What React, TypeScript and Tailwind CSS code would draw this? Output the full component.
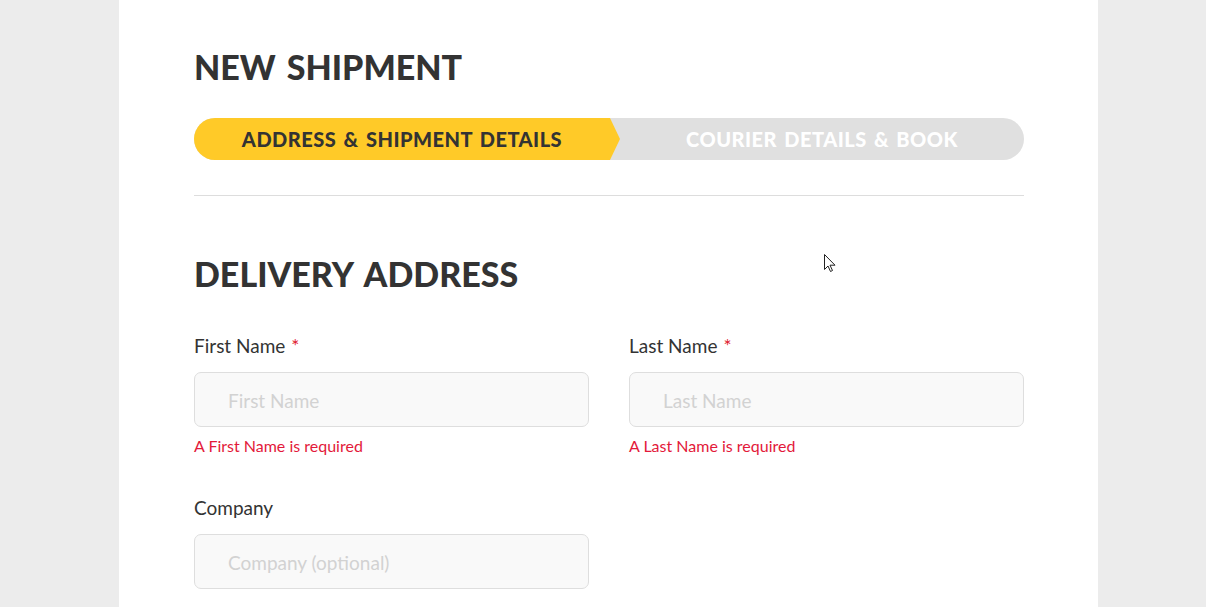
import React from "react";

const font = { fontFamily: "Lato, 'Noto Sans', 'Liberation Sans', sans-serif" };

function Field({
  label,
  placeholder,
  required,
  error,
}: {
  label: string;
  placeholder: string;
  required?: boolean;
  error?: string;
}) {
  return (
    <div className="flex flex-col">
      <label className="text-[19px] leading-[24px] text-[#333]">
        {label}
        {required && <span className="ml-[6px] text-[#e0192d]">*</span>}
      </label>
      <input
        placeholder={placeholder}
        className="mt-[14px] h-[55px] w-full rounded-[7px] border border-[#dedede] bg-[#f9f9f9] px-[33px] pt-[2px] text-[19px] text-[#333] outline-none placeholder:text-[#d2d2d2]"
      />
      {error && (
        <p className="mt-[9px] text-[16px] leading-[20px] text-[#e3193a]">{error}</p>
      )}
    </div>
  );
}

function Stepper() {
  return (
    <div className="flex h-[42px] overflow-hidden rounded-full bg-[#e0e0e0]">
      <div className="flex w-[426px] items-center justify-center bg-[#ffca28] pr-[10px] [clip-path:polygon(0_0,calc(100%-10px)_0,100%_50%,calc(100%-10px)_100%,0_100%)]">
        <span className="text-[20px] font-black tracking-[0.5px] text-[#333] [word-spacing:2px]">
          ADDRESS &amp; SHIPMENT DETAILS
        </span>
      </div>
      <div className="flex flex-1 items-center justify-center">
        <span className="text-[20px] font-black tracking-[0.5px] text-white [word-spacing:2px]">
          COURIER DETAILS &amp; BOOK
        </span>
      </div>
    </div>
  );
}

export default function App() {
  return (
    <div className="h-[607px] overflow-hidden bg-[#ececec]" style={font}>
      <div className="relative ml-[119px] h-[607px] w-[979px] bg-white pl-[75px] pr-[74px] pt-[44px]">
        <h1 className="text-[34px] leading-[46px] font-black text-[#333] [word-spacing:3px]">
          NEW SHIPMENT
        </h1>
        <div className="mt-[28px]">
          <Stepper />
        </div>
        <hr className="mt-[35px] border-t border-[#dddddd]" />

        <h2 className="mt-[55px] text-[34px] leading-[46px] font-black text-[#333] [word-spacing:4px]">
          DELIVERY ADDRESS
        </h2>

        <div className="mt-[37px] grid grid-cols-2 gap-x-[40px]">
          <Field
            label="First Name"
            placeholder="First Name"
            required
            error="A First Name is required"
          />
          <Field
            label="Last Name"
            placeholder="Last Name"
            required
            error="A Last Name is required"
          />
        </div>

        <div className="mt-[40px] grid grid-cols-2 gap-x-[40px]">
          <Field label="Company" placeholder="Company (optional)" />
        </div>

        {/* mouse pointer visible in the capture */}
        <svg
          className="absolute left-[705px] top-[254px]"
          width="12"
          height="19"
          viewBox="0 0 12 19"
        >
          <path
            d="M0.5 0.5 L0.5 15.5 L4 12 L6.5 17.5 L8.5 16.5 L6 11.2 L11 11.2 Z"
            fill="white"
            stroke="#222"
            strokeWidth="1"
            strokeLinejoin="round"
          />
        </svg>
      </div>
    </div>
  );
}
